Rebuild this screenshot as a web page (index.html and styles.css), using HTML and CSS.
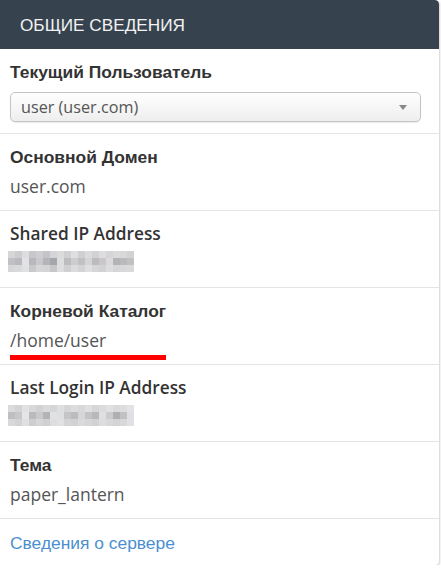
FILE: index.html
```html
<!DOCTYPE html>
<html lang="ru">
<head>
    <meta charset="UTF-8">
    <meta name="viewport" content="width=device-width, initial-scale=1.0">
    <title>Общие сведения</title>
    <link rel="stylesheet" href="styles.css">
</head>
<body>

    <div class="panel">
        <div class="panel-heading">ОБЩИЕ СВЕДЕНИЯ</div>

        <div class="info-row first">
            <div class="label">Текущий Пользователь</div>
            <div class="select-box">
                <span>user (user.com)</span>
                <span class="caret"></span>
            </div>
        </div>

        <div class="info-row">
            <div class="label">Основной Домен</div>
            <div class="value">user.com</div>
        </div>

        <div class="info-row">
            <div class="label label-en">Shared IP Address</div>
            <div class="value">
                <!-- blurred ip -->
                <svg class="blur-ip" width="126" height="21" viewBox="0 0 126 21">
                    <g transform="scale(7)">
                    <rect x="0" y="0" width="1" height="1" fill="#e6e6e8"/><rect x="1" y="0" width="1" height="1" fill="#dcdcdf"/><rect x="2" y="0" width="1" height="1" fill="#eeeef0"/><rect x="3" y="0" width="1" height="1" fill="#d6d6d9"/><rect x="4" y="0" width="1" height="1" fill="#dddde0"/><rect x="5" y="0" width="1" height="1" fill="#d2d3d6"/><rect x="6" y="0" width="1" height="1" fill="#e4e5e8"/><rect x="7" y="0" width="1" height="1" fill="#ebebed"/><rect x="8" y="0" width="1" height="1" fill="#e0e0e3"/><rect x="9" y="0" width="1" height="1" fill="#f0f0f2"/><rect x="10" y="0" width="1" height="1" fill="#dfdfe1"/><rect x="11" y="0" width="1" height="1" fill="#ececee"/><rect x="12" y="0" width="1" height="1" fill="#e2e2e5"/><rect x="13" y="0" width="1" height="1" fill="#eeeef0"/><rect x="14" y="0" width="1" height="1" fill="#e6e4e6"/><rect x="15" y="0" width="1" height="1" fill="#eaeaec"/><rect x="16" y="0" width="1" height="1" fill="#e8e8ea"/><rect x="17" y="0" width="1" height="1" fill="#e2e2e4"/>
                    <rect x="0" y="1" width="1" height="1" fill="#cfcfd2"/><rect x="1" y="1" width="1" height="1" fill="#c8c8cc"/><rect x="2" y="1" width="1" height="1" fill="#f4f4f6"/><rect x="3" y="1" width="1" height="1" fill="#c6c6ca"/><rect x="4" y="1" width="1" height="1" fill="#d8d8db"/><rect x="5" y="1" width="1" height="1" fill="#c2c3c7"/><rect x="6" y="1" width="1" height="1" fill="#b0b3b8"/><rect x="7" y="1" width="1" height="1" fill="#eceef0"/><rect x="8" y="1" width="1" height="1" fill="#cacacd"/><rect x="9" y="1" width="1" height="1" fill="#dcdcdf"/><rect x="10" y="1" width="1" height="1" fill="#d0d0d3"/><rect x="11" y="1" width="1" height="1" fill="#e4e4e6"/><rect x="12" y="1" width="1" height="1" fill="#cacacd"/><rect x="13" y="1" width="1" height="1" fill="#d8d6d8"/><rect x="14" y="1" width="1" height="1" fill="#eceaeb"/><rect x="15" y="1" width="1" height="1" fill="#c2c2c5"/><rect x="16" y="1" width="1" height="1" fill="#c8c8cb"/><rect x="17" y="1" width="1" height="1" fill="#d0d0d3"/>
                    <rect x="0" y="2" width="1" height="1" fill="#e6e6e8"/><rect x="1" y="2" width="1" height="1" fill="#eaeaec"/><rect x="2" y="2" width="1" height="1" fill="#f0f2f4"/><rect x="3" y="2" width="1" height="1" fill="#d8d8db"/><rect x="4" y="2" width="1" height="1" fill="#e6e6e8"/><rect x="5" y="2" width="1" height="1" fill="#e4e4e6"/><rect x="6" y="2" width="1" height="1" fill="#d6d6d9"/><rect x="7" y="2" width="1" height="1" fill="#eeeef0"/><rect x="8" y="2" width="1" height="1" fill="#e0e0e3"/><rect x="9" y="2" width="1" height="1" fill="#ececee"/><rect x="10" y="2" width="1" height="1" fill="#e4e4e6"/><rect x="11" y="2" width="1" height="1" fill="#f0f0f2"/><rect x="12" y="2" width="1" height="1" fill="#e6e6e8"/><rect x="13" y="2" width="1" height="1" fill="#e2e2e4"/><rect x="14" y="2" width="1" height="1" fill="#eeeef0"/><rect x="15" y="2" width="1" height="1" fill="#e6e6e8"/><rect x="16" y="2" width="1" height="1" fill="#e8e8ea"/><rect x="17" y="2" width="1" height="1" fill="#eaeaec"/>
                    </g>
                </svg>
            </div>
        </div>

        <div class="info-row">
            <div class="label">Корневой Каталог</div>
            <div class="value"><span class="marked">/home/user</span></div>
        </div>

        <div class="info-row">
            <div class="label label-en">Last Login IP Address</div>
            <div class="value">
                <svg class="blur-ip" width="126" height="21" viewBox="0 0 126 21">
                    <g transform="scale(7)">
                    <rect x="0" y="0" width="1" height="1" fill="#ececee"/><rect x="1" y="0" width="1" height="1" fill="#e4e4e6"/><rect x="2" y="0" width="1" height="1" fill="#f2f2f4"/><rect x="3" y="0" width="1" height="1" fill="#e8e8ea"/><rect x="4" y="0" width="1" height="1" fill="#e2e2e5"/><rect x="5" y="0" width="1" height="1" fill="#eaeaec"/><rect x="6" y="0" width="1" height="1" fill="#e6e6e8"/><rect x="7" y="0" width="1" height="1" fill="#f0f0f2"/><rect x="8" y="0" width="1" height="1" fill="#e6e6e8"/><rect x="9" y="0" width="1" height="1" fill="#eeeef0"/><rect x="10" y="0" width="1" height="1" fill="#e8e8ea"/><rect x="11" y="0" width="1" height="1" fill="#f0f0f2"/><rect x="12" y="0" width="1" height="1" fill="#e6e6e8"/><rect x="13" y="0" width="1" height="1" fill="#ececee"/><rect x="14" y="0" width="1" height="1" fill="#f2f2f4"/><rect x="15" y="0" width="1" height="1" fill="#eaeaec"/><rect x="16" y="0" width="1" height="1" fill="#eeeef0"/><rect x="17" y="0" width="1" height="1" fill="#f4f4f6"/>
                    <rect x="0" y="1" width="1" height="1" fill="#cdcdd0"/><rect x="1" y="1" width="1" height="1" fill="#d6d6d9"/><rect x="2" y="1" width="1" height="1" fill="#f6f6f8"/><rect x="3" y="1" width="1" height="1" fill="#c8c8cb"/><rect x="4" y="1" width="1" height="1" fill="#d8d8db"/><rect x="5" y="1" width="1" height="1" fill="#c0c0c4"/><rect x="6" y="1" width="1" height="1" fill="#f2f2f4"/><rect x="7" y="1" width="1" height="1" fill="#eef2ee"/><rect x="8" y="1" width="1" height="1" fill="#d4d4d7"/><rect x="9" y="1" width="1" height="1" fill="#cacacd"/><rect x="10" y="1" width="1" height="1" fill="#e6e6e8"/><rect x="11" y="1" width="1" height="1" fill="#d2d2d5"/><rect x="12" y="1" width="1" height="1" fill="#c6c6c9"/><rect x="13" y="1" width="1" height="1" fill="#f0f0f2"/><rect x="14" y="1" width="1" height="1" fill="#dadadc"/><rect x="15" y="1" width="1" height="1" fill="#bcbcc0"/><rect x="16" y="1" width="1" height="1" fill="#cfcfd2"/><rect x="17" y="1" width="1" height="1" fill="#eef2f4"/>
                    <rect x="0" y="2" width="1" height="1" fill="#e8e8ea"/><rect x="1" y="2" width="1" height="1" fill="#e2e2e4"/><rect x="2" y="2" width="1" height="1" fill="#f0f0f2"/><rect x="3" y="2" width="1" height="1" fill="#dedee0"/><rect x="4" y="2" width="1" height="1" fill="#e6e6e8"/><rect x="5" y="2" width="1" height="1" fill="#e0e0e2"/><rect x="6" y="2" width="1" height="1" fill="#eeeef0"/><rect x="7" y="2" width="1" height="1" fill="#f2f2f4"/><rect x="8" y="2" width="1" height="1" fill="#e4e4e6"/><rect x="9" y="2" width="1" height="1" fill="#e2e2e4"/><rect x="10" y="2" width="1" height="1" fill="#eaeaec"/><rect x="11" y="2" width="1" height="1" fill="#e6e6e8"/><rect x="12" y="2" width="1" height="1" fill="#e2e2e4"/><rect x="13" y="2" width="1" height="1" fill="#eeeef0"/><rect x="14" y="2" width="1" height="1" fill="#e8e8ea"/><rect x="15" y="2" width="1" height="1" fill="#e4e4e6"/><rect x="16" y="2" width="1" height="1" fill="#e8e8ea"/><rect x="17" y="2" width="1" height="1" fill="#f2f2f4"/>
                    </g>
                </svg>
            </div>
        </div>

        <div class="info-row">
            <div class="label">Тема</div>
            <div class="value">paper_lantern</div>
        </div>

        <div class="info-row last">
            <a href="#" class="server-link">Сведения о сервере</a>
        </div>
    </div>

</body>
</html>
```

FILE: styles.css
```css
* {
    margin: 0;
    padding: 0;
    box-sizing: border-box;
}
body {
    background: #fff;
    font-family: 'Liberation Sans', Arial, sans-serif;
    color: #333;
}
.panel {
    width: 439px;
    background: #fff;
    border-radius: 0 4px 4px 0;
    box-shadow: 1px 1px 2px rgba(0, 0, 0, 0.18);
    overflow: hidden;
}
.panel-heading {
    height: 49px;
    line-height: 50px;
    padding-left: 20px;
    background: #36434f;
    color: #f2f2f2;
    font-size: 17.2px;
    border-radius: 0 4px 0 0;
}
.info-row {
    padding: 13px 10px 12px;
    border-top: 1px solid #e4e4e4;
}
.info-row.first {
    border-top: none;
    padding-bottom: 11px;
}
.info-row.last {
    padding-top: 14px;
    padding-bottom: 12px;
}
.label {
    font-size: 17.4px;
    font-weight: bold;
    line-height: 20px;
    color: #333;
}
.label-en {
    font-family: 'Open Sans', sans-serif;
    font-weight: 600;
    font-size: 17.3px;
}
.value {
    margin-top: 7px;
    height: 24px;
    font-family: 'Open Sans', sans-serif;
    font-size: 17.5px;
    line-height: 24px;
    color: #555;
}
.select-box {
    margin-top: 10px;
    height: 30px;
    width: 411px;
    display: flex;
    align-items: center;
    justify-content: space-between;
    padding: 0 13px 0 10px;
    border: 1px solid #c4c4c4;
    border-radius: 5px;
    background: linear-gradient(#ffffff, #eeeeee);
    box-shadow: 0 1px 1px rgba(0, 0, 0, 0.08);
    font-family: 'Open Sans', sans-serif;
    font-size: 16.2px;
    color: #555;
}
.caret {
    width: 0;
    height: 0;
    border-left: 4px solid transparent;
    border-right: 4px solid transparent;
    border-top: 5px solid #888;
}
.blur-ip {
    display: block;
    margin: 2px 0 0 -2px;
    filter: brightness(0.93);
}
.marked {
    position: relative;
}
/* red mark drawn over the screenshot */
.marked::after {
    content: '';
    position: absolute;
    left: 0;
    top: 27px;
    width: 156px;
    height: 5px;
    background: #f00;
}
.server-link {
    display: block;
    font-size: 17.4px;
    line-height: 20px;
    color: #4b8fd1;
    text-decoration: none;
}
```
